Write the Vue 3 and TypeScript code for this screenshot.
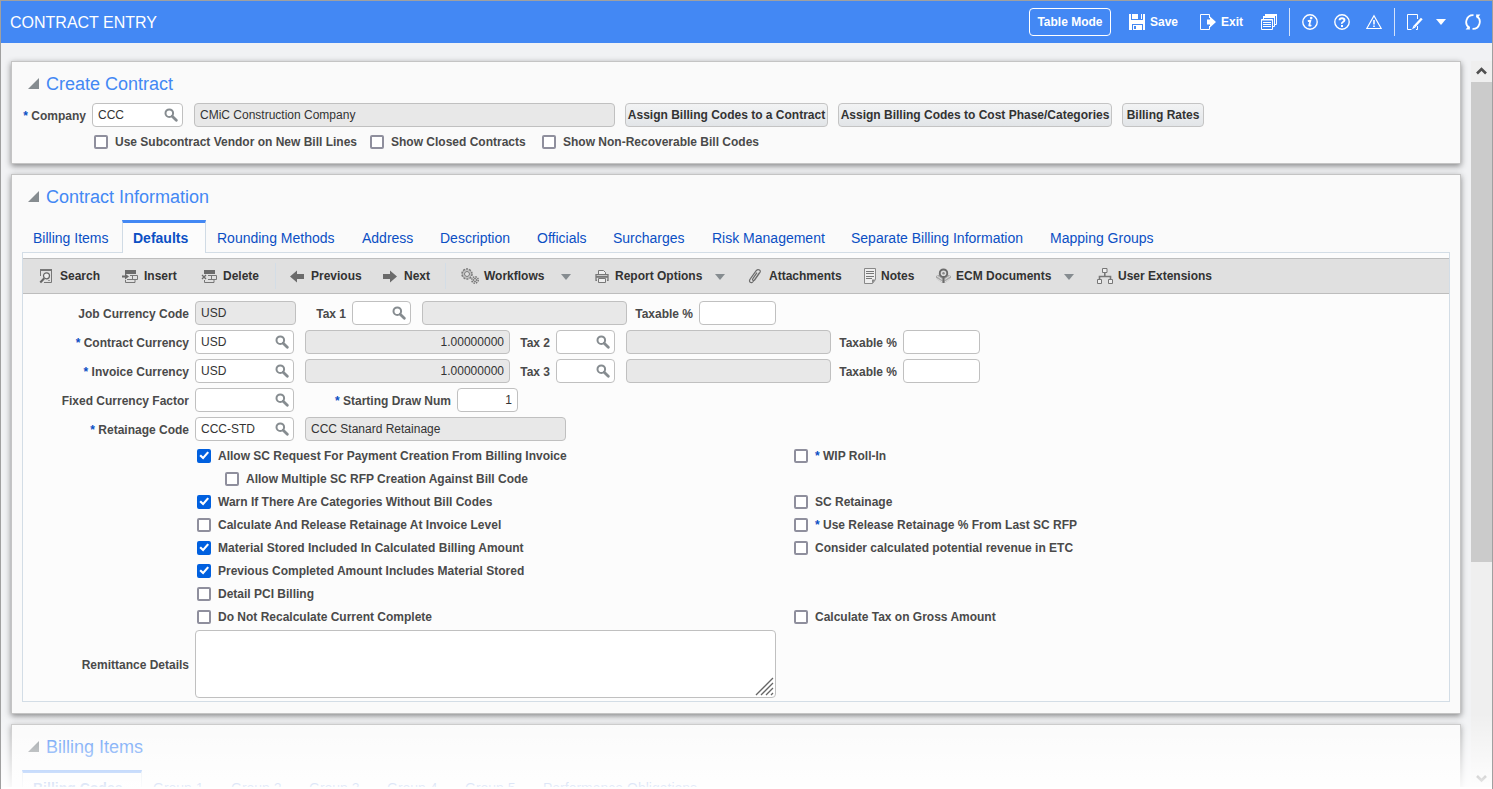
<script setup lang="ts">
import { ref, reactive } from 'vue'

interface Check {
  id: string
  label: string
  checked?: boolean
  required?: boolean
  indent?: boolean
}
interface Tool {
  icon: string
  label: string
  width: number
  menu?: boolean
  divider?: boolean
}
interface Tab {
  label: string
  width: number
}

const tabs: Tab[] = [
  { label: 'Billing Items', width: 100 },
  { label: 'Defaults', width: 84 },
  { label: 'Rounding Methods', width: 145 },
  { label: 'Address', width: 78 },
  { label: 'Description', width: 97 },
  { label: 'Officials', width: 76 },
  { label: 'Surcharges', width: 99 },
  { label: 'Risk Management', width: 139 },
  { label: 'Separate Billing Information', width: 199 },
  { label: 'Mapping Groups', width: 132 },
]
const activeTab = ref('Defaults')

const itemTabs: Tab[] = [
  { label: 'Billing Codes', width: 120 },
  { label: 'Group 1', width: 78 },
  { label: 'Group 2', width: 78 },
  { label: 'Group 3', width: 78 },
  { label: 'Group 4', width: 78 },
  { label: 'Group 5', width: 78 },
  { label: 'Performance Obligations', width: 184 },
]
const activeItemTab = ref('Billing Codes')

const tools: Tool[] = [
  { icon: 'search', label: 'Search', width: 84 },
  { icon: 'insert', label: 'Insert', width: 79 },
  { icon: 'delete', label: 'Delete', width: 74 },
  { icon: 'prev', label: 'Previous', width: 93, divider: true },
  { icon: 'next', label: 'Next', width: 62 },
  { icon: 'gears', label: 'Workflows', width: 133, menu: true, divider: true },
  { icon: 'print', label: 'Report Options', width: 154, menu: true },
  { icon: 'clip', label: 'Attachments', width: 117 },
  { icon: 'notes', label: 'Notes', width: 72 },
  { icon: 'ecm', label: 'ECM Documents', width: 160, menu: true },
  { icon: 'tree', label: 'User Extensions', width: 120 },
]

const companyChecks = reactive<Check[]>([
  { id: 'sub-vendor', label: 'Use Subcontract Vendor on New Bill Lines' },
  { id: 'closed', label: 'Show Closed Contracts' },
  { id: 'non-rec', label: 'Show Non-Recoverable Bill Codes' },
])

const optionRows = reactive<Check[][]>([
  [
    { id: 'sc-request', label: 'Allow SC Request For Payment Creation From Billing Invoice', checked: true },
    { id: 'wip', label: 'WIP Roll-In', required: true },
  ],
  [{ id: 'multi-rfp', label: 'Allow Multiple SC RFP Creation Against Bill Code', indent: true }],
  [
    { id: 'warn', label: 'Warn If There Are Categories Without Bill Codes', checked: true },
    { id: 'sc-ret', label: 'SC Retainage' },
  ],
  [
    { id: 'calc-rel', label: 'Calculate And Release Retainage At Invoice Level' },
    { id: 'use-rel', label: 'Use Release Retainage % From Last SC RFP', required: true },
  ],
  [
    { id: 'material', label: 'Material Stored Included In Calculated Billing Amount', checked: true },
    { id: 'etc', label: 'Consider calculated potential revenue in ETC' },
  ],
  [{ id: 'previous', label: 'Previous Completed Amount Includes Material Stored', checked: true }],
  [{ id: 'pci', label: 'Detail PCI Billing' }],
  [
    { id: 'no-recalc', label: 'Do Not Recalculate Current Complete' },
    { id: 'gross', label: 'Calculate Tax on Gross Amount' },
  ],
])

const currencyRows = reactive([
  { id: 'contract', label: 'Contract Currency', code: 'USD', rate: '1.00000000', tax: 'Tax 2', taxCode: '', pct: '' },
  { id: 'invoice', label: 'Invoice Currency', code: 'USD', rate: '1.00000000', tax: 'Tax 3', taxCode: '', pct: '' },
])

const form = reactive({
  company: 'CCC', tax1: '', pct1: '', factor: '', draw: '1', retainage: 'CCC-STD', remittance: '',
})
</script>

<template>
  <svg class="defs" aria-hidden="true">
    <symbol id="i-lens" viewBox="0 0 14 14">
      <circle cx="5.3" cy="5.2" r="3.8" fill="none" stroke="#868c90" stroke-width="2" />
      <path d="M8.2 8.2 12.3 12.2" stroke="#868c90" stroke-width="2.8" stroke-linecap="round" />
    </symbol>
    <symbol id="i-caret" viewBox="0 0 10 6"><path d="M0 0h10L5 6z" fill="currentColor" /></symbol>
    <symbol id="i-open" viewBox="0 0 11 11"><path d="M11 0v11H0z" fill="#868c90" /></symbol>

    <symbol id="i-save" viewBox="0 0 16 16">
      <path fill="#fff" d="M0 0h2v6h12V0h2v16h-2v-6H3v6H0zM3 0h6v5H3zM12 0h1v5h-1zM4 11h9v5H4z" />
      <path fill="#4388f4" d="M5 12h2v3H5z" />
    </symbol>
    <symbol id="i-exit" viewBox="0 0 16 16">
      <path fill="none" stroke="#fff" d="M9.500 4V.5H.5v15h9V12" />
      <path fill="#fff" d="M7 5.500h3V2.500L16 8l-6 5.500v-3H7z" />
    </symbol>
    <symbol id="i-windows" viewBox="0 0 16 16">
      <path fill="none" stroke="#fff" d="M4.500 3V.5h11v10H13M2.500 5V2.500h11v10H12" />
      <path fill="#fff" d="M4 0h12v2H4zM2 2h12v2H2z" />
      <path fill="#4388f4" stroke="#fff" d="M.5 5.500h11v10H.5z" />
      <path stroke="#fff" d="M0 6h12M2 8.500h8M2 10.500h8M2 12.500h8" />
    </symbol>
    <symbol id="i-info" viewBox="0 0 16 16">
      <circle cx="8" cy="8" r="7.200" fill="none" stroke="#fff" stroke-width="1.400" />
      <circle cx="9.200" cy="4" r="1.300" fill="#fff" />
      <path d="M5.800 7.200 8.400 6.600 7.200 11.400Q7.200 12.200 9.400 11.200" fill="none" stroke="#fff" stroke-width="1.700" />
    </symbol>
    <symbol id="i-help" viewBox="0 0 16 16">
      <circle cx="8" cy="8" r="7.200" fill="none" stroke="#fff" stroke-width="1.400" />
      <path d="M5.500 6.300Q5.600 4.200 8 4.200T10.500 6.100Q10.500 7.200 9 8T8 9.800" fill="none" stroke="#fff" stroke-width="1.900" />
      <path d="M7 11h2v2H7z" fill="#fff" />
    </symbol>
    <symbol id="i-warn" viewBox="0 0 16 16">
      <path d="M8 1.800 15.200 14.500H.8z" fill="none" stroke="#fff" stroke-width="1.200" />
      <path d="M7.200 6h1.600v4.500H7.200zM7.200 11.500h1.600V13H7.200z" fill="#fff" />
    </symbol>
    <symbol id="i-edit" viewBox="0 0 16 16">
      <path d="M10.500 5V.5H.5v15h4M9 15.500h1.500V12" fill="none" stroke="#fff" />
      <path d="M14.800 4.500 7.500 12.500" stroke="#fff" stroke-width="2.400" />
      <path d="M6.600 11.500 8.500 13.400 5 15.200z" fill="#fff" />
    </symbol>
    <symbol id="i-refresh" viewBox="0 0 16 16">
      <path d="M4.600 14A6.900 6.900 0 0 1 8.500 1.200M11.400 2A6.900 6.900 0 0 1 7.500 14.800" fill="none" stroke="#fff" stroke-width="1.800" />
      <path d="M11 .6h4.400L12 4.600zM5 15.400H.6L4 11.400z" fill="#fff" />
    </symbol>

    <symbol id="i-search" viewBox="0 0 17 16">
      <path d="M2.500 8V1.500h11v13H6" fill="none" stroke="#777" />
      <path d="M2 1h12v2H2z" fill="#777" />
      <circle cx="8.500" cy="7.800" r="3" fill="#eee" stroke="#666" stroke-width="1.200" />
      <path d="M6.300 10.200 2.300 14.500" stroke="#666" stroke-width="2" />
      <path d="M10 12.500h2" stroke="#999" />
    </symbol>
    <symbol id="i-insert" viewBox="0 0 17 16">
      <path d="M3 2h11v4H3z" fill="#6b6b6b" />
      <path d="M0 7.600h3V5.500L7 8.500 3 11.500V9.400H0z" fill="#6b6b6b" />
      <path d="M8 7.500h7.500v4H5M10.500 7.500v4M3.500 12v2.500H13V12" fill="none" stroke="#777" />
    </symbol>
    <symbol id="i-delete" viewBox="0 0 17 16">
      <path d="M3 2h11v4H3z" fill="#6b6b6b" />
      <path d="M1 7l4 4M5 7l-4 4" stroke="#6b6b6b" stroke-width="1.300" />
      <path d="M7 7.500h8.500v4H7M10.500 7.500v4M3.500 12v2.500H13V12" fill="none" stroke="#777" />
    </symbol>
    <symbol id="i-prev" viewBox="0 0 16 16"><path d="M0 8.500 7 2.500v3.500h7v5H7v3.500z" fill="#6b6b6b" /></symbol>
    <symbol id="i-next" viewBox="0 0 16 16"><path d="M14 8.500 7 2.500v3.500H0v5h7v3.500z" fill="#6b6b6b" /></symbol>
    <symbol id="i-gears" viewBox="0 0 19 16">
      <circle cx="7" cy="6" r="5" fill="none" stroke="#777" stroke-width="1.500" stroke-dasharray="2 1.140" />
      <circle cx="7" cy="6" r="4.200" fill="#d8d8d8" stroke="#888" stroke-width=".7" />
      <circle cx="7" cy="6" r="2.500" fill="#e0e0e0" stroke="#777" />
      <circle cx="15" cy="12" r="3.200" fill="#d8d8d8" stroke="#777" stroke-width="1.500" stroke-dasharray="1.500 1" />
      <circle cx="15" cy="12" r="1.500" fill="#e0e0e0" stroke="#777" />
    </symbol>
    <symbol id="i-print" viewBox="0 0 17 16">
      <path d="M5.500 6V2.500h5l2 2V6" fill="#eee" stroke="#777" />
      <path d="M4 12.300H3V6.600h12v5.700h-1" fill="none" stroke="#777" stroke-width="1.300" />
      <path d="M3 8h12v1.800H3z" fill="#777" />
      <path d="M5.500 10.500h7v4h-7z" fill="#eee" stroke="#777" />
    </symbol>
    <symbol id="i-clip" viewBox="0 0 17 16">
      <path d="M12.500 4.500 7 12.500Q5 15.500 3.300 14.300T3.500 10.700L9.200 2.700Q10.800 .8 12.500 2T12.300 5.300L7.600 12Q6.500 13 5.800 12.200T6 10.300L10 4.700" fill="none" stroke="#6b6b6b" stroke-width="1.200" />
    </symbol>
    <symbol id="i-notes" viewBox="0 0 12 16">
      <path d="M.5 .5h11v11l-3 4h-8z" fill="#eee" stroke="#888" />
      <path d="M2 3.500h8M2 5.500h8M2 8.500h8M2 10.500h6" stroke="#777" />
      <path d="M8 15.500v-4h3.500z" fill="#888" />
    </symbol>
    <symbol id="i-ecm" viewBox="0 0 16 16">
      <path d="M0 8 4 6l4 4 4-4 4 2v3l-7 4.500H7L0 11z" fill="#aaa" />
      <path d="M0 10.500 7 14.500M16 10.500 9 14.500M1 8l6 4M15 8l-6 4" stroke="#eee" stroke-width=".8" />
      <circle cx="8" cy="5" r="4" fill="#ddd" stroke="#6b6b6b" stroke-width="2" />
      <circle cx="8" cy="5" r="1.300" fill="#888" />
      <path d="M7 9h2v6.500H7z" fill="#6b6b6b" />
    </symbol>
    <symbol id="i-tree" viewBox="0 0 17 16">
      <path d="M6.500 .5h4.500v4H6.500zM1.500 11.500h4v4h-4zM12.500 11.500h4v4h-4z" fill="#eee" stroke="#777" />
      <path d="M8.800 5v3M3.500 11V8.500h11V11" fill="none" stroke="#777" stroke-width="1.600" />
    </symbol>
  </svg>

  <div class="shell">
    <header class="top">
      <h1>CONTRACT ENTRY</h1>
      <button class="mode" type="button">Table Mode</button>
      <button class="act save" type="button"><svg class="i16"><use href="#i-save" /></svg>Save</button>
      <button class="act exit" type="button"><svg class="i16"><use href="#i-exit" /></svg>Exit</button>
      <button class="act win" type="button" aria-label="Windows"><svg class="i16"><use href="#i-windows" /></svg></button>
      <div class="group">
        <button class="act" type="button" aria-label="Information"><svg class="i16"><use href="#i-info" /></svg></button>
        <button class="act" type="button" aria-label="Help"><svg class="i16"><use href="#i-help" /></svg></button>
        <button class="act" type="button" aria-label="Warnings"><svg class="i16"><use href="#i-warn" /></svg></button>
      </div>
      <button class="act" type="button" aria-label="Edit"><svg class="i16"><use href="#i-edit" /></svg></button>
      <button class="act drop" type="button" aria-label="Edit menu"><svg class="caret"><use href="#i-caret" /></svg></button>
      <button class="act" type="button" aria-label="Refresh"><svg class="i16"><use href="#i-refresh" /></svg></button>
    </header>

    <div class="body">
      <main>
        <section class="panel create">
          <h2><svg class="open"><use href="#i-open" /></svg>Create Contract</h2>
          <div class="line company">
            <label class="lbl" for="company"><i>*</i> Company</label>
            <span class="lookup w-company">
              <input id="company" v-model="form.company" type="text" />
              <button type="button" aria-label="Find company"><svg><use href="#i-lens" /></svg></button>
            </span>
            <input class="ro w-name gap" value="CMiC Construction Company" aria-label="Company name" readonly />
            <button class="btn b-contract" type="button">Assign Billing Codes to a Contract</button>
            <button class="btn b-phase" type="button">Assign Billing Codes to Cost Phase/Categories</button>
            <button class="btn b-rates" type="button">Billing Rates</button>
          </div>
          <div class="checks">
            <label v-for="c in companyChecks" :key="c.id" class="check">
              <input v-model="c.checked" type="checkbox" />{{ c.label }}
            </label>
          </div>
        </section>

        <section class="panel info">
          <h2><svg class="open"><use href="#i-open" /></svg>Contract Information</h2>
          <div class="tabs" role="tablist">
            <button
              v-for="t in tabs" :key="t.label" type="button" role="tab" :style="{ width: t.width + 'px' }"
              :aria-selected="t.label === activeTab" :class="{ on: t.label === activeTab }" @click="activeTab = t.label"
            >{{ t.label }}</button>
          </div>
          <div class="sheet">
            <div class="tools" role="toolbar">
              <template v-for="t in tools" :key="t.label">
                <span v-if="t.divider" class="rule"></span>
                <button type="button" :class="['tool', t.icon]" :style="{ width: t.width + 'px' }">
                  <svg class="ti"><use :href="'#i-' + t.icon" /></svg>{{ t.label }}
                  <svg v-if="t.menu" class="caret"><use href="#i-caret" /></svg>
                </button>
              </template>
            </div>

            <div class="form">
              <div class="line">
                <label class="lbl" for="job">Job Currency Code</label>
                <input id="job" class="ro w-job" value="USD" readonly />
                <label class="lbl l-tax1" for="tax1">Tax 1</label>
                <span class="lookup w-tax">
                  <input id="tax1" v-model="form.tax1" type="text" />
                  <button type="button" aria-label="Find tax 1"><svg><use href="#i-lens" /></svg></button>
                </span>
                <input class="ro w-rate gap" aria-label="Tax 1 name" readonly />
                <label class="lbl l-pct" for="pct1">Taxable %</label>
                <input id="pct1" v-model="form.pct1" class="w-pct" type="text" />
              </div>
              <div v-for="r in currencyRows" :key="r.id" class="line">
                <label class="lbl" :for="r.id"><i>*</i> {{ r.label }}</label>
                <span class="lookup w-code">
                  <input :id="r.id" v-model="r.code" type="text" />
                  <button type="button" :aria-label="'Find ' + r.label"><svg><use href="#i-lens" /></svg></button>
                </span>
                <input class="ro w-rate gap num" :value="r.rate" :aria-label="r.label + ' rate'" readonly />
                <label class="lbl l-tax" :for="r.id + '-tax'">{{ r.tax }}</label>
                <span class="lookup w-tax">
                  <input :id="r.id + '-tax'" v-model="r.taxCode" type="text" />
                  <button type="button" :aria-label="'Find ' + r.tax"><svg><use href="#i-lens" /></svg></button>
                </span>
                <input class="ro w-rate gap" :aria-label="r.tax + ' name'" readonly />
                <label class="lbl l-pct" :for="r.id + '-pct'">Taxable %</label>
                <input :id="r.id + '-pct'" v-model="r.pct" class="w-pct" type="text" />
              </div>
              <div class="line">
                <label class="lbl" for="factor">Fixed Currency Factor</label>
                <span class="lookup w-code">
                  <input id="factor" v-model="form.factor" type="text" />
                  <button type="button" aria-label="Find factor"><svg><use href="#i-lens" /></svg></button>
                </span>
                <label class="lbl l-draw" for="draw"><i>*</i> Starting Draw Num</label>
                <input id="draw" v-model="form.draw" class="w-draw num" type="text" />
              </div>
              <div class="line">
                <label class="lbl" for="retainage"><i>*</i> Retainage Code</label>
                <span class="lookup w-code">
                  <input id="retainage" v-model="form.retainage" type="text" />
                  <button type="button" aria-label="Find retainage code"><svg><use href="#i-lens" /></svg></button>
                </span>
                <input class="ro w-ret gap" value="CCC Stanard Retainage" aria-label="Retainage name" readonly />
              </div>

              <div class="options">
                <div v-for="(row, n) in optionRows" :key="n" class="option-row">
                  <label v-for="c in row" :key="c.id" :class="['check', { indent: c.indent }]">
                    <input v-model="c.checked" type="checkbox" /><span><i v-if="c.required">* </i>{{ c.label }}</span>
                  </label>
                </div>
              </div>

              <div class="line remit">
                <label class="lbl" for="remit">Remittance Details</label>
                <span class="area">
                  <textarea id="remit" v-model="form.remittance"></textarea>
                  <svg class="grip" viewBox="0 0 20 20"><path d="M1 18 18 1M6 18 18 6M11 18l7-7M16 18l2-2" stroke="#666" stroke-width="1.300" /></svg>
                </span>
              </div>
            </div>
          </div>
        </section>

        <section class="panel items">
          <h2><svg class="open"><use href="#i-open" /></svg>Billing Items</h2>
          <div class="tabs" role="tablist">
            <button
              v-for="t in itemTabs" :key="t.label" type="button" role="tab" :style="{ width: t.width + 'px' }"
              :aria-selected="t.label === activeItemTab" :class="{ on: t.label === activeItemTab }" @click="activeItemTab = t.label"
            >{{ t.label }}</button>
          </div>
        </section>
      </main>

      <div class="scroll" aria-hidden="true">
        <svg viewBox="0 0 21 21"><path d="M6 12.500 10.500 8 15 12.500" fill="none" stroke="#505050" stroke-width="2.600" /></svg>
        <div class="track"><div class="thumb"></div></div>
        <svg viewBox="0 0 21 21"><path d="M6 8 10.500 12.500 15 8" fill="none" stroke="#505050" stroke-width="2.600" /></svg>
      </div>
    </div>
    <div class="fade"></div>
  </div>
</template>

<style>
body { margin: 0; background: #fff; }
</style>

<style scoped>
* { box-sizing: border-box; }
.defs { position: absolute; width: 0; height: 0; }
.shell {
  position: relative; display: flex; flex-direction: column; height: 100vh; overflow: hidden;
  border: 1px solid #a0a0a0; border-bottom: 0; background: #f1f2f4;
  font: bold 12px/16px "Liberation Sans", Arial, sans-serif; color: #4a4a4a;
}
button, input, textarea { font: inherit; color: inherit; margin: 0; }
button { padding: 0; border: 0; background: none; white-space: nowrap; }
svg { display: block; flex: none; }
i { font-style: normal; color: #0b4fc4; }

.top { display: flex; align-items: center; height: 42px; flex: none; padding: 0 11px 0 9px; background: #4388f4; color: #fff; }
h1 { flex: 1; margin: 0; padding-top: 2px; font-size: 16px; line-height: 20px; font-weight: normal; }
.mode { width: 82px; height: 28px; border: 1px solid #fff; border-radius: 4px; }
.act { display: flex; align-items: center; gap: 5px; }
.i16 { width: 16px; height: 16px; }
.save { margin-left: 18px; }
.exit { margin-left: 22px; }
.win { margin-left: 18px; }
.group { display: flex; align-items: center; gap: 16px; height: 28px; margin: 0 12px; padding: 0 12px; border: solid #d3e2fb; border-width: 0 1px; }
.drop { margin: 0 19px 0 13px; }
.caret { width: 10px; height: 6px; }

.body { display: flex; flex: 1; min-height: 0; }
main { flex: 1; min-width: 0; overflow: hidden; padding: 18px 10px 0; }
.panel { border: 1px solid #c4c4c4; background: #fafafa; box-shadow: 0 2px 6px rgba(0, 0, 0, .45); margin-bottom: 10px; padding: 10px 10px 11px; }
.create { padding-bottom: 13px; }
h2 { display: flex; align-items: center; gap: 7px; height: 24px; margin: 0; padding-left: 6px; font-size: 18px; font-weight: normal; color: #4388f4; }
.open { width: 11px; height: 11px; margin-bottom: 1px; }

.line { display: flex; align-items: center; height: 24px; }
.lbl { flex: none; width: 166px; margin-right: 6px; padding-top: 2px; text-align: right; white-space: nowrap; }
.company { margin: 7px 0 0 -10px; }
.company .lbl { width: 74px; }
.l-tax1 { width: 50px; }
.l-tax { width: 40px; }
.l-pct { width: 66px; }
.l-draw { width: 157px; }
input, textarea { height: 24px; padding: 0 5px; border: 1px solid #c0c0c0; border-radius: 4px; background: #fff; font-weight: normal; color: #333; outline: 0; }
input.ro { background: #e8e8e8; }
.gap { margin-left: 11px; }
.num { text-align: right; }
.w-job { width: 101px; }
.w-code { width: 99px; }
.w-company { width: 91px; }
.w-tax { width: 59px; }
.w-rate { width: 205px; }
.w-pct { width: 77px; }
.w-draw { width: 61px; }
.w-ret { width: 261px; }
.w-name { width: 421px; }
.lookup { display: flex; align-items: center; height: 24px; padding-right: 4px; border: 1px solid #c0c0c0; border-radius: 4px; background: #fff; }
.lookup input { flex: 1; width: 0; height: 22px; border: 0; background: none; }
.lookup svg { width: 14px; height: 14px; }
.btn { flex: none; height: 24px; margin-left: 10px; border: 1px solid #c4c4c4; border-radius: 4px; background: linear-gradient(#f2f3f4, #e2e5e8); color: #333; }
.b-contract { width: 203px; }
.b-phase { width: 274px; }
.b-rates { width: 82px; }

.check { display: flex; align-items: center; gap: 7px; white-space: nowrap; }
.check input { position: relative; flex: none; appearance: none; width: 14px; height: 14px; padding: 0; border: 2px solid #8f8f9d; border-radius: 2px; }
.check input:checked { border-color: #0060df; background: #0060df; }
.check input:checked::after { content: ""; position: absolute; inset: -2px; background: #fff; clip-path: polygon(17% 54%, 28% 43%, 43% 58%, 74% 21%, 86% 31%, 44% 79%); }
.checks { display: grid; grid-template-columns: 276px 172px auto; height: 16px; margin: 7px 0 0 72px; }

.tabs { display: flex; height: 32px; margin-top: 11px; }
.tabs button { display: flex; flex: none; align-items: center; padding: 4px 0 0 11px; font-size: 14px; font-weight: normal; color: #0b4fc4; }
.tabs .on { position: relative; z-index: 1; height: 33px; padding: 0 0 0 10px; border: solid #d0dbe5; border-width: 0 1px; border-top: 3px solid #4388f4; background: #fcfcfc; font-weight: bold; }

.sheet { border: 1px solid #d3dde6; padding: 5px 0 3px; background: #fcfcfc; }
.tools { display: flex; align-items: center; height: 36px; padding-left: 15px; border: solid #bdbdbd; border-width: 1px 0; background: #e0e0e0; color: #333; overflow: hidden; }
.tool { display: flex; flex: none; align-items: center; gap: 5px; }
.tool .caret { margin: 2px 22px 0 auto; color: #868c90; }
.ti { width: 17px; height: 16px; }
.gears .ti { width: 19px; }
.prev .ti, .next .ti { width: 16px; }
.notes .ti { width: 12px; }
.ecm .ti { width: 15px; }
.rule { width: 1px; height: 26px; margin-right: 14px; background: #d3dde6; }

.form { display: flex; flex-direction: column; gap: 5px; padding-top: 7px; }
.options { margin: -2px 0 -3px 174px; }
.option-row { display: grid; grid-template-columns: 597px 1fr; height: 23px; }
.indent { padding-left: 28px; }
.remit { height: auto; }
.area { position: relative; display: block; width: 581px; }
textarea { display: block; width: 100%; height: 68px; resize: none; }
.grip { position: absolute; right: 1px; bottom: 1px; width: 20px; height: 20px; }

.items { height: 200px; }

.scroll { display: flex; flex-direction: column; flex: none; width: 21px; margin-top: 18px; background: #efefef; }
.scroll svg { width: 21px; height: 21px; }
.track { flex: 1; }
.thumb { height: 70%; background: #cbcbcb; }
.fade { position: absolute; inset: auto -1px 0; height: 76px; z-index: 2; background: linear-gradient(rgba(255, 255, 255, 0), rgba(255, 255, 255, .9) 74px, #fff 74px); pointer-events: none; }
</style>
